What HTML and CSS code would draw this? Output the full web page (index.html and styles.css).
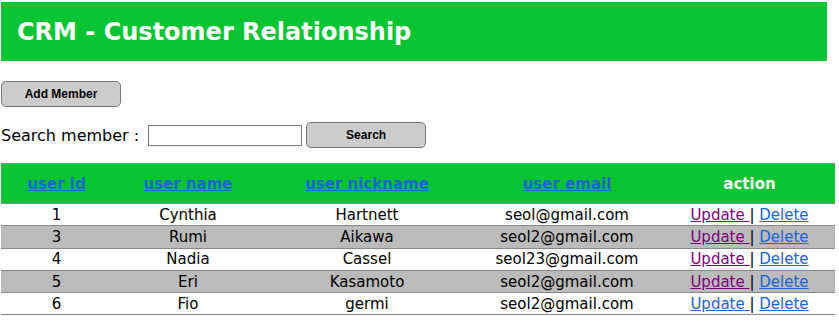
FILE: index.html
```html
<!DOCTYPE html>
<html lang="en">
<head>
  <meta charset="UTF-8" />
  <title>CRM - Customer Relationship</title>
  <link rel="stylesheet" href="styles.css">
</head>
<body>
  <div class="topbar">
    <h1>CRM - Customer Relationship</h1>
  </div>

  <div class="toolbar">
    <button type="button" class="btn">Add Member</button>
  </div>

  <form class="search-row" onsubmit="return false;">
    <label for="inputSearch">Search member :</label>
    <input type="text" id="inputSearch" name="search" />
    <button type="submit" class="btn">Search</button>
  </form>

  <table class="member-table">
    <colgroup>
      <col class="col-id">
      <col class="col-name">
      <col class="col-nick">
      <col class="col-email">
      <col class="col-action">
    </colgroup>
    <thead>
      <tr>
        <th><a href="#">user id</a></th>
        <th><a href="#">user name</a></th>
        <th><a href="#">user nickname</a></th>
        <th><a href="#">user email</a></th>
        <th>action</th>
      </tr>
    </thead>
    <tbody>
      <tr>
        <td>1</td><td>Cynthia</td><td>Hartnett</td><td>seol@gmail.com</td>
        <td><a href="#" class="visited">Update </a> | <a href="#">Delete</a></td>
      </tr>
      <tr class="alt">
        <td>3</td><td>Rumi</td><td>Aikawa</td><td>seol2@gmail.com</td>
        <td><a href="#" class="visited">Update </a> | <a href="#">Delete</a></td>
      </tr>
      <tr>
        <td>4</td><td>Nadia</td><td>Cassel</td><td>seol23@gmail.com</td>
        <td><a href="#" class="visited">Update </a> | <a href="#">Delete</a></td>
      </tr>
      <tr class="alt">
        <td>5</td><td>Eri</td><td>Kasamoto</td><td>seol2@gmail.com</td>
        <td><a href="#" class="visited">Update </a> | <a href="#">Delete</a></td>
      </tr>
      <tr>
        <td>6</td><td>Fio</td><td>germi</td><td>seol2@gmail.com</td>
        <td><a href="#">Update </a> | <a href="#">Delete</a></td>
      </tr>
    </tbody>
  </table>
</body>
</html>
```

FILE: styles.css
```css
* {
  box-sizing: border-box;
}
body {
  margin: 2px 4px 0 1px;
  font-family: 'DejaVu Sans', Verdana, sans-serif;
  font-size: 15px;
  color: #000;
  background: #fff;
}
.topbar {
  background: #0ac434;
  height: 59px;
  margin-right: 8px;
  display: flex;
  align-items: center;
  padding-left: 16px;
}
.topbar h1 {
  margin: 0;
  color: #fff;
  font-size: 24px;
  font-weight: bold;
}
.toolbar {
  margin-top: 20px;
}
.btn {
  width: 120px;
  height: 26px;
  background: #cccccc;
  border: 1px solid #777;
  border-radius: 5px;
  font-family: 'Liberation Sans', Arial, sans-serif;
  font-size: 12px;
  font-weight: bold;
  color: #000;
  cursor: pointer;
}
.search-row {
  display: flex;
  align-items: center;
  margin-top: 15px;
}
.search-row label {
  font-size: 16px;
  margin-right: 9px;
}
.search-row input {
  width: 154px;
  height: 21px;
  border: 1px solid #777;
  margin: 0 4px 0 0;
  padding: 0 3px;
}
.member-table {
  margin-top: 15px;
  width: 834px;
  border-collapse: collapse;
  border-top: 1px solid #888;
}
.col-id { width: 111px; }
.col-name { width: 152px; }
.col-nick { width: 206px; }
.col-email { width: 194px; }
.col-action { width: 171px; }
.member-table th {
  background: #0ac434;
  color: #fff;
  height: 40px;
  font-size: 15px;
  font-weight: bold;
  border-bottom: 1px solid #888;
  padding: 0;
}
.member-table th a {
  color: #1a64d4;
}
.member-table td {
  text-align: center;
  height: 22.3px;
  padding: 0;
  border-bottom: 1px solid #888;
  font-size: 15px;
}
.member-table tr.alt td {
  background: #bbbbbb;
}
.member-table td a {
  color: #1a64d4;
}
.member-table td a.visited {
  color: #800080;
}
```
